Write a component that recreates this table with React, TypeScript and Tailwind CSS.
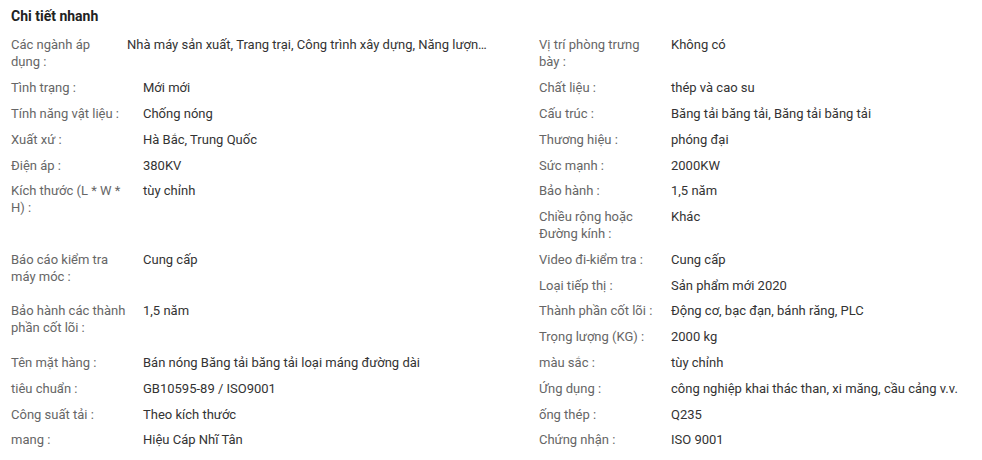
import React from "react";

type Spec = { label: string; value: string };

const specs: Spec[] = [
  { label: "Vị trí phòng trưng bày :", value: "Không có" },
  { label: "Tình trạng :", value: "Mới mới" },
  { label: "Chất liệu :", value: "thép và cao su" },
  { label: "Tính năng vật liệu :", value: "Chống nóng" },
  { label: "Cấu trúc :", value: "Băng tải băng tải, Băng tải băng tải" },
  { label: "Xuất xứ :", value: "Hà Bắc, Trung Quốc" },
  { label: "Thương hiệu :", value: "phóng đại" },
  { label: "Điện áp :", value: "380KV" },
  { label: "Sức mạnh :", value: "2000KW" },
  { label: "Kích thước (L * W * H) :", value: "tùy chỉnh" },
  { label: "Bảo hành :", value: "1,5 năm" },
  { label: "Chiều rộng hoặc Đường kính :", value: "Khác" },
  { label: "Báo cáo kiểm tra máy móc :", value: "Cung cấp" },
  { label: "Video đi-kiểm tra :", value: "Cung cấp" },
  { label: "Loại tiếp thị :", value: "Sản phẩm mới 2020" },
  { label: "Bảo hành các thành phần cốt lõi :", value: "1,5 năm" },
  { label: "Thành phần cốt lõi :", value: "Động cơ, bạc đạn, bánh răng, PLC" },
  { label: "Trọng lượng (KG) :", value: "2000 kg" },
  { label: "Tên mặt hàng :", value: "Bán nóng Băng tải băng tải loại máng đường dài" },
  { label: "màu sắc :", value: "tùy chỉnh" },
  { label: "tiêu chuẩn :", value: "GB10595-89 / ISO9001" },
  { label: "Ứng dụng :", value: "công nghiệp khai thác than, xi măng, cầu cảng v.v." },
  { label: "Công suất tải :", value: "Theo kích thước" },
  { label: "ống thép :", value: "Q235" },
  { label: "mang :", value: "Hiệu Cáp Nhĩ Tân" },
  { label: "Chứng nhận :", value: "ISO 9001" },
];

export default function App() {
  return (
    <div className="w-full h-[460px] overflow-hidden bg-white font-['Roboto','Liberation_Sans',sans-serif] text-[13px] leading-[17px]">
      {/* wider than the window, the right column runs past the edge like the original */}
      <div className="w-[1078px] pl-[11px] pt-[6px] flow-root">
        <h2 className="text-[14px] leading-[20px] font-bold text-[#222] mb-[6px]">Chi tiết nhanh</h2>

        {/* first item: value truncated, label squeezed */}
        <div className="float-left w-[528px] flex py-[4.4px]">
          <div className="w-[116px] shrink-0 pr-2 text-[#666]">Các ngành áp dụng :</div>
          <div className="w-[362px] truncate text-[#333]">
            Nhà máy sản xuất, Trang trại, Công trình xây dựng, Năng lượng &amp; Khai thác mỏ
          </div>
        </div>

        {specs.map((s, i) => (
          <div key={i} className="float-left w-[528px] flex py-[4.4px]">
            <div className="w-[132px] shrink-0 pr-3 text-[#666]">{s.label}</div>
            <div className="flex-1 text-[#333]">{s.value}</div>
          </div>
        ))}
      </div>
    </div>
  );
}
